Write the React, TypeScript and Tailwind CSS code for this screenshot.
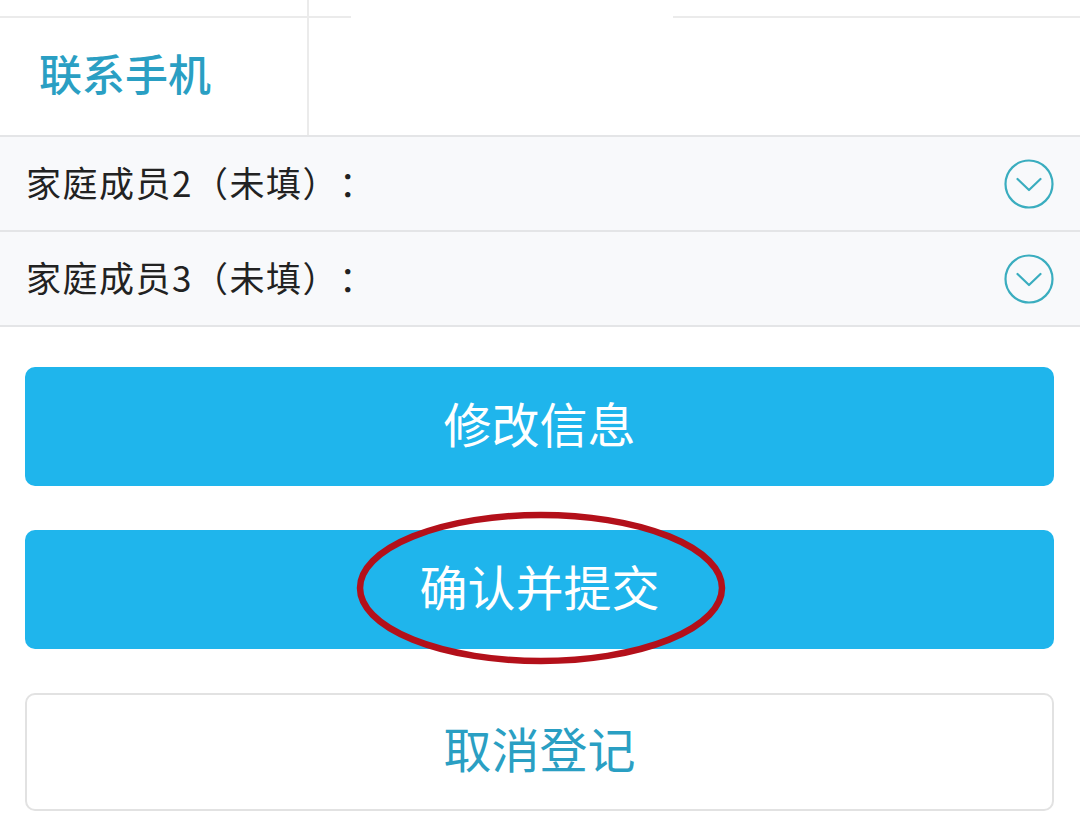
const FONT = '"Noto Sans CJK SC", "Noto Sans", sans-serif';

// Thin circled chevron used on collapsed rows
function CircleChevron() {
  return (
    <svg width="52" height="52" viewBox="0 0 52 52" fill="none" stroke="#3aadbf">
      <circle cx="26" cy="26" r="23.5" strokeWidth="2.2" />
      <polyline points="14.5,21 26,32 37.5,21" strokeWidth="2.2" strokeLinecap="round" strokeLinejoin="round" />
    </svg>
  );
}

// Collapsed family-member row
function MemberRow({ label }: { label: string }) {
  return (
    <div className="flex h-[95px] items-center justify-between border-b-2 border-[#e4e5e7] bg-[#f8f9fb] pl-[26px] pr-[25px]">
      <span className="pb-[4px] text-[35px] leading-none tracking-[1.5px] text-[#222] [text-spacing-trim:space-all]">
        {label}
      </span>
      <CircleChevron />
    </div>
  );
}

export default function App() {
  return (
    <div className="relative h-[816px] w-[1080px] overflow-hidden bg-white" style={{ fontFamily: FONT }}>
      {/* Tail of the previous field row */}
      <div className="flex h-[18px]">
        <div className="w-[351px] border-b-2 border-[#ebebeb]">
          <div className="h-full w-[309px] border-r-2 border-[#ebebeb]" />
        </div>
        <div className="w-[322px]" />
        <div className="flex-1 border-b-2 border-[#ebebeb]" />
      </div>

      {/* Phone field */}
      <div className="flex h-[119px] border-b-2 border-[#e4e5e7]">
        <div className="flex w-[309px] items-center border-r-2 border-[#ebebeb] pb-[8px] pl-[39px]">
          <span className="text-[43px] font-medium leading-none text-[#2a9fc3]">联系手机</span>
        </div>
        <div className="flex-1" />
      </div>

      <MemberRow label="家庭成员2（未填）：" />
      <MemberRow label="家庭成员3（未填）：" />

      {/* Actions */}
      <div className="flex flex-col gap-[44px] pl-[25px] pr-[26px] pt-[40px]">
        <button className="flex h-[119px] items-center justify-center rounded-[10px] bg-[#1fb5ec] pb-[10px] text-[48px] text-white">
          修改信息
        </button>
        <button className="flex h-[119px] items-center justify-center rounded-[10px] bg-[#1fb5ec] pb-[10px] text-[48px] text-white">
          确认并提交
        </button>
        <button className="flex h-[118px] items-center justify-center rounded-[10px] border-2 border-[#e2e2e2] bg-white pb-[10px] text-[48px] text-[#2a9fc3]">
          取消登记
        </button>
      </div>

      {/* Red annotation ellipse drawn over the submit button */}
      <svg className="pointer-events-none absolute left-0 top-0" width="1080" height="816">
        <ellipse cx="541" cy="588" rx="181" ry="73" fill="none" stroke="#b3101a" strokeWidth="6.5" />
      </svg>
    </div>
  );
}
